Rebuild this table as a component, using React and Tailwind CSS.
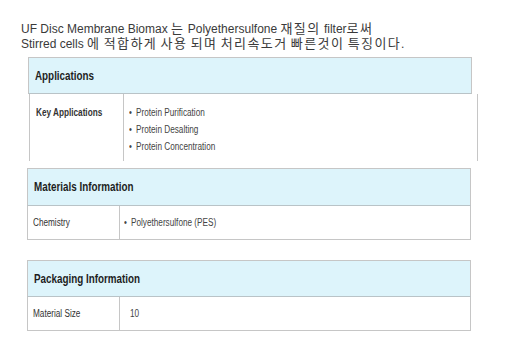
import React from "react";

// Arial Narrow metrics: Liberation Sans squeezed horizontally
const narrow = "font-['Liberation_Sans',Arial,sans-serif] origin-left scale-x-[0.82]";

// Hangul runs sit on a slightly larger, wider grid
function K({ children }) {
  return (
    <span className="text-[13px] leading-[15px] tracking-[1.4px] font-['Noto_Sans_CJK_KR',sans-serif]">
      {children}
    </span>
  );
}

function SpecTable({ title, rows, headerH, bodyH, labelW, bodyClass = "", open = false }) {
  return (
    <div className="w-[444px]">
      <div
        className={`flex items-center border border-[#c6c6c6] border-b-[#b9c3c7] bg-[#ddf4fb] pl-[6px] ${headerH}`}
      >
        <div className={`${narrow} text-[12px] leading-[14px] font-bold text-[#1e1e1e]`}>{title}</div>
      </div>
      {rows.map((r) => (
        <div
          key={r.label}
          className={`flex border-x border-[#c6c6c6] ${open ? "" : "border-b"} ${bodyH} ${bodyClass}`}
        >
          <div className={`${labelW} shrink-0 border-r border-[#c6c6c6] ${r.labelPad}`}>
            <div className={`${narrow} text-[10px] leading-[17px] text-[#333] ${r.bold ? "font-bold" : ""}`}>
              {r.label}
            </div>
          </div>
          <div className={`flex flex-1 flex-col ${r.valuePad}`}>
            {r.values.map((v) => (
              <div key={v} className={`${narrow} text-[10px] leading-[17px] text-[#444]`}>
                {r.bullet ? <span className="mr-[5px]">•</span> : null}
                {v}
              </div>
            ))}
          </div>
        </div>
      ))}
    </div>
  );
}

export default function App() {
  return (
    <div className="w-[516px] h-[362px] bg-white overflow-hidden">
      <div className="pl-[21px] pt-[20px] text-[12px] text-[#3a3a3a] font-['Liberation_Sans','Noto_Sans_CJK_KR',sans-serif]">
        <div className="h-[15px] leading-[15px] whitespace-nowrap">
          UF Disc Membrane Biomax <K>는</K> Polyethersulfone <K>재질의</K> filter<K>로써</K>
        </div>
        <div className="h-[15px] leading-[15px] whitespace-nowrap">
          Stirred cells <K>에</K> <K>적합하게</K> <K>사용</K> <K>되며</K> <K>처리속도거</K> <K>빠른것이</K>{" "}
          <K>특징이다</K>.
        </div>
      </div>

      <div className="ml-[28px] mt-[7px]">
        <SpecTable
          title="Applications"
          headerH="h-[37px]"
          bodyH="h-[67px]"
          bodyClass="ml-[1px] w-[449px]"
          labelW="w-[94px]"
          open
          rows={[
            {
              label: "Key Applications",
              bold: true,
              labelPad: "pl-[6px] pt-[10px]",
              valuePad: "pl-[5px] pt-[10px]",
              bullet: true,
              values: ["Protein Purification", "Protein Desalting", "Protein Concentration"],
            },
          ]}
        />
      </div>

      <div className="ml-[27px] mt-[7px]">
        <SpecTable
          title="Materials Information"
          headerH="h-[38px]"
          bodyH="h-[34px]"
          labelW="w-[92px]"
          rows={[
            {
              label: "Chemistry",
              labelPad: "pl-[5px] pt-[8px]",
              valuePad: "pl-[4px] pt-[8px]",
              bullet: true,
              values: ["Polyethersulfone (PES)"],
            },
          ]}
        />
      </div>

      <div className="ml-[27px] mt-[20px]">
        <SpecTable
          title="Packaging Information"
          headerH="h-[37px]"
          bodyH="h-[34px]"
          labelW="w-[92px]"
          rows={[
            {
              label: "Material Size",
              labelPad: "pl-[5px] pt-[8px]",
              valuePad: "pl-[10px] pt-[8px]",
              values: ["10"],
            },
          ]}
        />
      </div>
    </div>
  );
}
